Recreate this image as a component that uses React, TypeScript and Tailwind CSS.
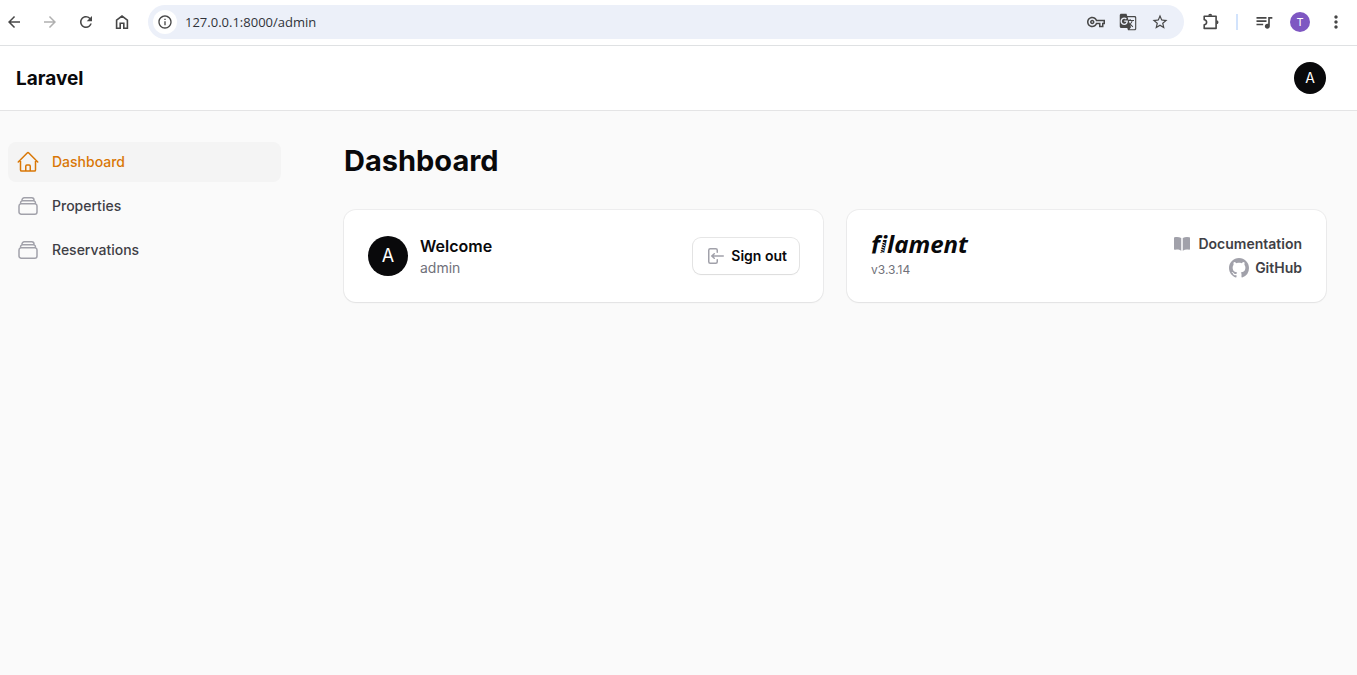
import type { ReactNode } from "react";
import {
  MdArrowBack,
  MdArrowForward,
  MdGTranslate,
  MdInfoOutline,
  MdMoreVert,
  MdOutlineVpnKey,
  MdQueueMusic,
  MdRefresh,
  MdStarBorder,
} from "react-icons/md";
import { HiMiniBookOpen, HiOutlineHome, HiOutlineRectangleStack } from "react-icons/hi2";

function ToolButton({ label, children }: { label: string; children: ReactNode }) {
  return (
    <button type="button" aria-label={label} className="flex size-5 shrink-0 items-center justify-center">
      {children}
    </button>
  );
}

function HomeGlyph() {
  return (
    <svg viewBox="0 0 20 20" className="size-5" fill="none" stroke="currentColor" strokeWidth="1.6">
      <path d="M4.6 8.2 10 4l5.4 4.2v8.1h-3.6v-5H8.2v5H4.6z" />
    </svg>
  );
}

function PuzzleGlyph() {
  return (
    <svg viewBox="0 0 20 20" className="size-5" fill="none" stroke="currentColor" strokeWidth="1.6" strokeLinejoin="round">
      <path d="M4.2 4.2h11.9v12.2H4.2v-3.6c3.2-.3 3.2-4.7 0-5z" />
      <path d="M8.2 3.8a2 2 0 0 1 4 0zM16.5 8.3a2 2 0 0 1 0 4z" fill="currentColor" stroke="none" />
    </svg>
  );
}

function BrowserBar() {
  return (
    <div className="flex h-[46px] items-center border-b border-[#dfe1e3] bg-white pr-[11px] pb-px text-[#474747]">
      <nav aria-label="Browser" className="flex items-center gap-4 pl-1">
        <ToolButton label="Back"><MdArrowBack className="size-[18px]" /></ToolButton>
        <span className="flex text-[#b0b0b0]">
          <ToolButton label="Forward"><MdArrowForward className="size-[18px]" /></ToolButton>
        </span>
        <ToolButton label="Reload"><MdRefresh className="size-[18px]" /></ToolButton>
        <ToolButton label="Home"><HomeGlyph /></ToolButton>
      </nav>
      <div className="ml-4 flex h-[34px] min-w-0 flex-1 items-center rounded-full bg-[#ecf0f9] pr-3.5 pl-[5px]">
        <button type="button" aria-label="Site information" className="flex size-6 items-center justify-center rounded-full bg-white">
          <MdInfoOutline className="size-4" />
        </button>
        <input
          aria-label="Address"
          defaultValue="127.0.0.1:8000/admin"
          className="ml-2 min-w-0 flex-1 bg-transparent pt-px font-['Open_Sans',sans-serif] text-[13px] text-[#30333a] outline-none"
        />
        <div className="flex items-center gap-3">
          <ToolButton label="Passwords"><MdOutlineVpnKey className="size-[18px]" /></ToolButton>
          <ToolButton label="Translate"><MdGTranslate className="size-[18px]" /></ToolButton>
          <ToolButton label="Bookmark"><MdStarBorder className="size-[18px]" /></ToolButton>
        </div>
      </div>
      <div className="flex items-center pl-4">
        <ToolButton label="Extensions"><PuzzleGlyph /></ToolButton>
        <span className="mx-4 h-4 w-0.5 bg-[#d2e3fc]" />
        <ToolButton label="Media"><MdQueueMusic className="size-5" /></ToolButton>
        <button type="button" aria-label="Profile" className="mx-4 flex size-5 items-center justify-center rounded-full bg-[#7e57c2] text-[11px] text-white">
          T
        </button>
        <ToolButton label="More"><MdMoreVert className="size-5" /></ToolButton>
      </div>
    </div>
  );
}

function NavItem({ icon, label, active = false }: { icon: ReactNode; label: string; active?: boolean }) {
  return (
    <li>
      <a
        href="#"
        aria-current={active ? "page" : undefined}
        className={
          active
            ? "flex h-10 items-center gap-3 rounded-lg bg-[#f4f4f4] px-2 text-sm font-medium text-[#d97706]"
            : "flex h-10 items-center gap-3 rounded-lg px-2 text-sm font-medium text-[#3f3f46]"
        }
      >
        <span className={active ? "text-[#d97706]" : "text-[#a1a1aa]"}>{icon}</span>
        {label}
      </a>
    </li>
  );
}

function Card({ children }: { children: ReactNode }) {
  return (
    <section className="flex h-[92px] items-center rounded-xl bg-white px-6 shadow-xs ring-1 ring-[#09090b]/5">
      {children}
    </section>
  );
}

function SignOutIcon() {
  return (
    <svg viewBox="0 0 20 20" className="size-5 text-[#a1a1aa]" fill="currentColor">
      <path d="M3 4.25A2.25 2.25 0 0 1 5.25 2h5.5A2.25 2.25 0 0 1 13 4.25v2a.75.75 0 0 1-1.5 0v-2a.75.75 0 0 0-.75-.75h-5.5a.75.75 0 0 0-.75.75v11.5c0 .414.336.75.75.75h5.5a.75.75 0 0 0 .75-.75v-2a.75.75 0 0 1 1.5 0v2A2.25 2.25 0 0 1 10.75 18h-5.5A2.25 2.25 0 0 1 3 15.75V4.25Z" />
      <path d="M19 10a.75.75 0 0 0-.75-.75H8.704l1.048-.943a.75.75 0 1 0-1.004-1.114l-2.5 2.25a.75.75 0 0 0 0 1.114l2.5 2.25a.75.75 0 1 0 1.004-1.114l-1.048-.943h9.546A.75.75 0 0 0 19 10Z" />
    </svg>
  );
}

function GitHubIcon() {
  return (
    <svg viewBox="0 0 16 16" className="size-5 text-[#a1a1aa]" fill="currentColor">
      <path d="M8 0C3.58 0 0 3.58 0 8c0 3.54 2.29 6.53 5.47 7.59.4.07.55-.17.55-.38 0-.19-.01-.82-.01-1.49-2.01.37-2.53-.49-2.69-.94-.09-.23-.48-.94-.82-1.13-.28-.15-.68-.52-.01-.53.63-.01 1.08.58 1.23.82.72 1.21 1.87.87 2.33.66.07-.52.28-.87.51-1.07-1.78-.2-3.64-.89-3.64-3.95 0-.87.31-1.59.82-2.15-.08-.2-.36-1.02.08-2.12 0 0 .67-.21 2.2.82.64-.18 1.32-.27 2-.27s1.36.09 2 .27c1.53-1.04 2.2-.82 2.2-.82.44 1.1.16 1.92.08 2.12.51.56.82 1.27.82 2.15 0 3.07-1.87 3.75-3.65 3.95.29.25.54.73.54 1.48 0 1.07-.01 1.93-.01 2.2 0 .21.15.46.55.38A8.01 8.01 0 0 0 16 8c0-4.42-3.58-8-8-8Z" />
    </svg>
  );
}

// The drawing cuts the coil into the stem of the i and trims the tail of the f at the baseline.
function FilamentLogo() {
  return (
    <a href="#" className="relative block font-['Open_Sans',sans-serif] text-2xl leading-5 font-bold text-[#09090b] italic">
      filament
      <svg viewBox="0 0 24 28" className="absolute top-0 -left-1 h-7 w-6">
        <path d="M0 19.5h12V28H0z" fill="#fff" />
        <path
          d="M14.6 7.8 18.4 9.2M14.2 10.2l3.8 1.4M13.8 12.6l3.8 1.4M13.4 15l3.8 1.4M13 17.4l3.8 1.4"
          fill="none"
          stroke="#fff"
          strokeWidth="0.9"
        />
      </svg>
    </a>
  );
}

export default function App() {
  return (
    <div className="flex min-h-screen flex-col bg-[#fafafa] font-['Inter',sans-serif] text-[#09090b]">
      <BrowserBar />
      <header className="flex h-[65px] items-center justify-between border-b border-[#e4e4e5] bg-white pr-[31px] pl-4">
        <a href="#" className="text-[19px] leading-[21px] font-bold">Laravel</a>
        <button type="button" aria-label="User menu" className="flex size-8 items-center justify-center rounded-full bg-[#09090b] text-sm text-white">
          A
        </button>
      </header>
      <div className="flex flex-1">
        <aside className="w-80 shrink-0 pt-[31px] pr-[39px] pl-2">
          <nav aria-label="Main">
            <ul className="flex flex-col gap-1">
              <NavItem active label="Dashboard" icon={<HiOutlineHome className="size-6" />} />
              <NavItem label="Properties" icon={<HiOutlineRectangleStack className="size-6" />} />
              <NavItem label="Reservations" icon={<HiOutlineRectangleStack className="size-6" />} />
            </ul>
          </nav>
        </aside>
        <main className="min-w-0 flex-1 pt-8 pr-[31px] pl-6">
          <h1 className="text-[29px] leading-9 font-bold">Dashboard</h1>
          <div className="mt-[31px] grid grid-cols-2 gap-6">
            <Card>
              <span className="flex size-10 items-center justify-center rounded-full bg-[#09090b] text-lg text-white">A</span>
              <div className="ml-3 flex-1">
                <h2 className="text-base leading-6 font-semibold">Welcome</h2>
                <p className="text-sm text-[#71717a]">admin</p>
              </div>
              <button type="button" className="flex h-9 items-center gap-1.5 rounded-lg bg-white px-3 text-sm font-semibold shadow-xs ring-1 ring-[#09090b]/10">
                <SignOutIcon />
                Sign out
              </button>
            </Card>
            <Card>
              <div className="flex-1">
                <FilamentLogo />
                <p className="relative mt-2 text-xs text-[#71717a]">v3.3.14</p>
              </div>
              <div className="flex flex-col items-end gap-1 text-sm font-semibold text-[#3f3f46]">
                <a href="#" className="flex h-5 items-center gap-1.5">
                  <HiMiniBookOpen className="size-5 text-[#a1a1aa]" />
                  Documentation
                </a>
                <a href="#" className="flex h-5 items-center gap-1.5">
                  <GitHubIcon />
                  GitHub
                </a>
              </div>
            </Card>
          </div>
        </main>
      </div>
    </div>
  );
}
